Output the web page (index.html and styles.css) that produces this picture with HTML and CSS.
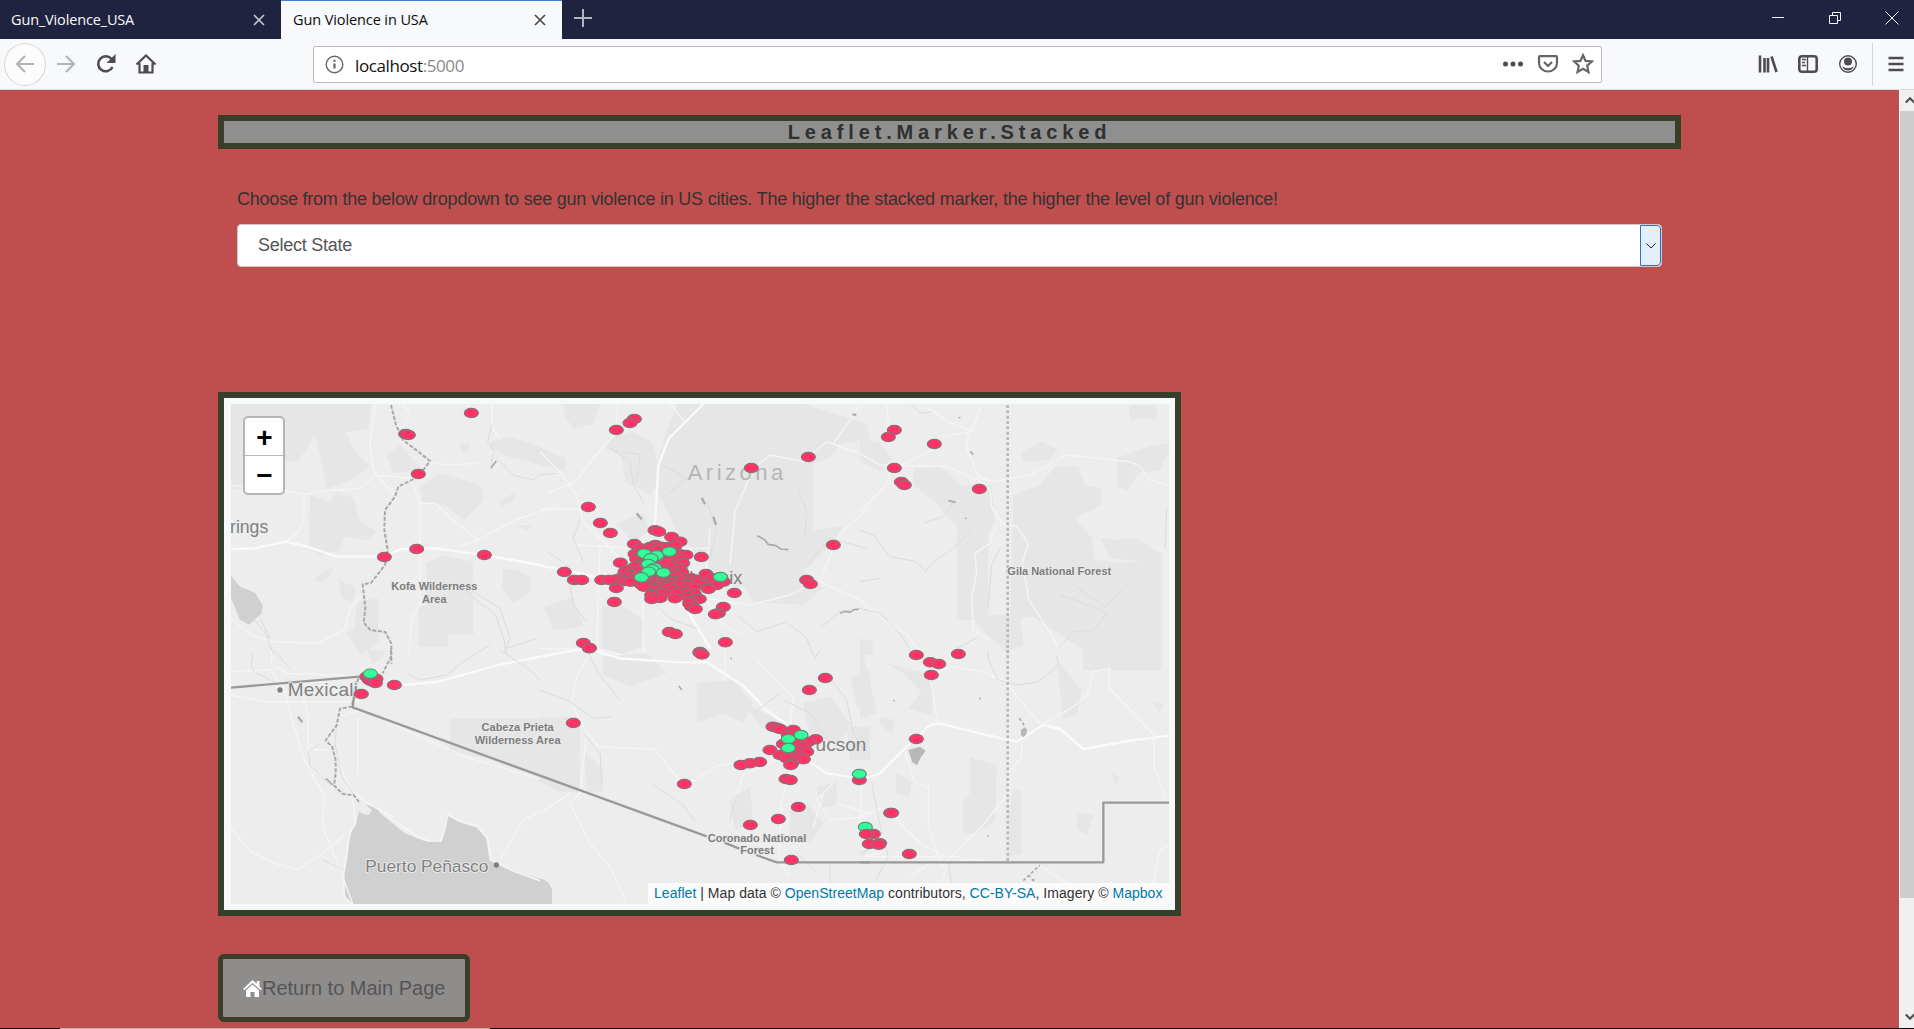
FILE: index.html
```html
<!DOCTYPE html>
<html lang="en">
<head>
<meta charset="utf-8">
<title>Gun Violence in USA</title>
<link rel="stylesheet" href="styles.css">
</head>
<body>
<header class="tabs">
  <div class="tab"><span class="tab-title">Gun_Violence_USA</span><svg class="x" viewBox="0 0 12 12"><path d="M1 1l10 10M11 1L1 11"/></svg></div>
  <div class="tab active"><span class="tab-title">Gun Violence in USA</span><svg class="x" viewBox="0 0 12 12"><path d="M1 1l10 10M11 1L1 11"/></svg></div>
  <svg class="plus" viewBox="0 0 18 18"><path d="M9 0v18M0 9h18"/></svg>
  <div class="win">
    <span><svg width="14" height="14" viewBox="0 0 14 14"><path d="M1 6.500h12"/></svg></span>
    <span><svg width="14" height="14" viewBox="0 0 14 14"><path d="M1.500 4.500h8v8h-8zM4.500 4.500v-3h8v8h-3"/></svg></span>
    <span><svg width="14" height="14" viewBox="0 0 14 14"><path d="M.5.5l13 13M13.500.5l-13 13"/></svg></span>
  </div>
</header>
<nav class="toolbar">
  <span class="nav back"><svg width="20" height="20" viewBox="0 0 20 20"><path d="M19 10H2M10 2L2 10l8 8"/></svg></span>
  <span class="nav dim"><svg width="20" height="20" viewBox="0 0 20 20"><path d="M1 10h17M10 2l8 8-8 8"/></svg></span>
  <span class="nav"><svg width="20" height="20" viewBox="0 0 20 20"><path class="bold" d="M16.500 13A7.500 7.500 0 1 1 15.500 5"/><path class="solid" d="M19.500 0v9h-9z"/></svg></span>
  <span class="nav"><svg width="22" height="20" viewBox="0 0 22 20"><path d="M1.500 10.500L11 1.500l9.500 9M4.500 9v9.500h13V9"/><path class="solid" d="M8.500 11h5v7h-5z"/></svg></span>
  <div class="url">
    <svg width="19" height="19" viewBox="0 0 19 19"><circle class="thin" cx="9.500" cy="9.500" r="8.300"/><path d="M9.500 8.500v5M9.500 4.800v2"/></svg>
    <span class="address">localhost<i>:5000</i></span>
    <span class="tools">
      <svg width="22" height="20" viewBox="0 0 22 20"><g class="solid"><circle cx="3.500" cy="10" r="2.500"/><circle cx="11" cy="10" r="2.500"/><circle cx="18.500" cy="10" r="2.500"/></g></svg>
      <svg width="22" height="20" viewBox="0 0 22 20"><path d="M3 2.200h16q1 0 1 1V9a9 8.500 0 0 1-18 0V3.200q0-1 1-1zM7 8l4 4 4-4"/></svg>
      <svg width="22" height="22" viewBox="0 0 22 22"><path d="M11 2.200l2.600 5.700 6.200.6-4.600 4.200 1.300 6.300L11 15.800 5.500 19l1.300-6.300-4.600-4.200 6.200-.6z"/></svg>
    </span>
  </div>
  <div class="right">
    <span><svg width="20" height="20" viewBox="0 0 20 20"><path class="bold" d="M2 1.500v17M6.500 4v14.500M10 4v14.500M13.500 2.500l5 15.500"/></svg></span>
    <span><svg width="20" height="20" viewBox="0 0 20 20"><rect class="bold" x="1.300" y="2.300" width="17.400" height="15.400" rx="2.500"/><path class="thin" d="M9.500 2v16M4 5.500h4M4 8.500h3M4 11.500h4"/></svg></span>
    <span><svg width="20" height="20" viewBox="0 0 20 20"><circle class="thin" cx="10" cy="10" r="8.300"/><circle class="solid" cx="10" cy="7.500" r="4"/><path class="solid" d="M4 12.500q6 3.500 12 0-2 4-6 4t-6-4z"/></svg></span>
    <span class="menu"><svg width="16" height="16" viewBox="0 0 16 16"><path class="bold" d="M.5 2h15M.5 8h15M.5 14h15"/></svg></span>
  </div>
</nav>
<div class="viewport">
  <main class="page">
    <h1 class="banner">Leaflet.Marker.Stacked</h1>
    <section class="chooser">
      <p>Choose from the below dropdown to see gun violence in US cities. The higher the stacked marker, the higher the level of gun violence!</p>
      <div class="select"><span>Select State</span><b><svg width="10" height="6" viewBox="0 0 10 6"><path d="M.5.5L5 5 9.500.5"/></svg></b></div>
    </section>
    <section class="frame"><div class="map">
      <svg class="canvas" viewBox="0 0 2814 1500" width="938" height="500">
        <g transform="translate(-63 -57)">
          <g class="park">
            <path d="M63 57h420l-8 75-70 10 40 70 35 30-60 45-70 25-15-85-20-75-50 75-45 5-40 80H63z"/>
            <path d="M300 330l60 20 20-30 50 20 20 70 50 30-30 25-70-10-10 40-60 15-35-20z"/>
            <path d="M530 210l40-30 40 45 30 30-90 10z"/><path d="M630 310l60-45 70 20 50 15 12 45-60 60-55-45-70-5z"/>
            <path d="M840 170l60-15 75 25 90 40v40l-110-30-60-15-55-25z"/>
            <path d="M650 535l50-25 90 20v220h-75v35h-90V670l25-10z"/>
            <path d="M880 550l40 5 45 25-5 40-50 35-35-45zM310 580l60-35-10 30-30 20z"/>
            <path d="M385 585l50 20-5 45-35-10zM440 650l65-10v130l-50 40-45-65 25-15zM750 175h30l-5 25h-20zM870 350l45-30-5 30-40 15zM920 420h50l-20 18z"/>
          </g>
          <path class="water" d="M63 573l28 32 44 18 24 40-6 24-36 32-27-15-27-65z"/>
          <path class="road main" d="M63 492l70-2 95-20 60 14 90 30h145l50-22 100-2 150 20 180 32"/>
          <path class="road" d="M63 302l100 4 120 22 70-12 95-5 50-40 120 10M495 57l-15 120 10 80 60 70M282 330v70l-12 35-42 36M606 290l24 65v300l-25 45-8 110M630 355h45l60 55 70 55 110-60 130-45M580 57l20 30-30 60M845 57v70l25 35M660 230l50 10 90-5M63 700l60 50 70 20 130 5 80-40 20-70 30-30M740 485l65-20"/>
          <path class="river" d="M740 590l70 65 45 30 25 70 10 55M790 620l80 50 30 90-20 50M130 700l40 50 20 60M150 700l30 60M890 790l90-30M860 220l50 50 60 15 20-20M845 120l-12 50 20 30-10 40"/>
          <path class="state" d="M543 60l15 60 22 46 45 34 35 28-35 47-60 30-10 30-30 40-2 60 10 60-8 45-42 54-25 4 8 70-5 45 20 22 45 6 18 35v60"/>
          <path class="speck" d="M842 250l17-22"/>
          <text class="town" x="60" y="444" font-size="53">rings</text>
          <text class="area" x="673" y="615">Kofa Wilderness</text><text class="area" x="673" y="653">Area</text>
        </g>
        <g transform="translate(927 -57)">
          <g class="park">
            <path d="M70 57h110l-20 60-60 15-25-40z"/><path d="M205 160l70-20 60 30 20 70-20 90-80-40-10-80-50-20z"/>
            <path d="M410 57h380l190 60 10 45-90 15-30 40-50 20v200l90-15-30 50-70 70-80 60-140 5-60-40-110-110-80-160 30-130z"/>
            <path d="M185 665l50-10 80 50-10 80-60 25-60-20zM10 665l90-30 30 90-90 10zM590 560l180-20 80 70-60 50-150-10zM230 415l80-30 20 50-50 40z"/>
          </g>
          <path class="road main" d="M490 57l-60 60-45 45-30 80-8 140-5 60M340 560l110 130 60 100M0 542l100 18 120 30"/>
          <path class="road" d="M390 57l45 55M235 57l-10 90-80 90-40 55-80 30M0 200l60 60 50 70 20 80 50 50 60 60M0 372h130M570 540l15-160 55-130 50-40 100 20 70-60 95 35M880 175l50-70 30-48M840 590l130 60M380 620l250 40 120-30 90-45 60-140 90-80M110 480l200 10h200M180 480l-10 310M310 650v150M0 790l180 5 70 15M460 590l90 130 60 30M510 430l-10 120"/>
          <path class="river" d="M210 190l60 40 10 70 35 60M250 200l50 10-10 80M370 240l70 40-60 50M500 350l30 80-20 90M770 300l30 80-5 80M120 400l-20 60 30 70M800 540l70-80 110 30M0 270l50-5M20 500l60 40 20 120 40 50M330 640l60 60 80 30M590 690l60 50 90-30 60 50 20 50M840 730l60-50 60-10"/>
          <path class="speck wide" d="M290 385l15 18M485 338l10 20M520 395l8 25M937 89h12"/>
          <path class="speck" d="M652 452l22 12 10 14 24 4 14 10 23 2M900 685l16-6 14 3 12-8 14-1"/>
          <text class="state-name" x="443" y="284">Arizona</text>
          <text class="town" x="607" y="598" font-size="54" text-anchor="end">Phoenix</text>
        </g>
        <g transform="translate(1887 -57)">
          <g class="park">
            <path d="M0 160l60 15 35 45-35 40-60-30z"/><path d="M160 250l80-5 60 55h95l10 100-20 50v285l-30-10-10-20h-55V425l-60-70-70-55z"/>
            <path d="M460 330l80-30 45-55h70l20 55 50 10v50l-80 40 50 60 10 65 80 10 80-10 20-30 20 10v350H670v-60l-90-60-60-40-70 5z"/>
            <path d="M485 200l60-30 50 25-30 30-75 5zM770 220l110-40 47-5v30l-30 50-60 10-35 50-30-10zM808 60h82v45l-40-5-42 8zM720 460l50 5 60-5 60 40-20 30-120-10zM370 690h110l10 90-50 20-70-60z"/>
            <path d="M0 760l40 10v40H0z"/>
          </g>
          <path class="road" d="M205 70l60 40 70 30 30-80M325 140l-5 50 35 85 45 15 110-20 110-60 190 20 30 15 30 40 70 20M335 140l-90 15M0 205l60 35 200 5 95 40 35 30 5 50 30 50 45 10 35 50-18 60 20 110 70 110 15 30M410 420l-20 55-45 30 5 60-15 70 5 100 50 30M80 57l10 120M0 380l80-80 15-50 30-10 120-60M0 650l80 60 60 40 50 60"/>
          <path class="river" d="M155 60l30 25 30-5M0 435l40 15 50 65 80 15 25 30 30-35 50-30 40-40 20-20M190 415l60-20 35-50M420 490l-25 50-10 130M600 630l60 20 80 35-40 50-60 5-45 50M640 600l95 65 70-65M920 370l-5 120M0 590l60-10M0 670l60 15 60 60 30 50M350 760l-60 30"/>
          <path class="speck" d="M265 347l22 5M330 200l10 8M296 98h5M315 400h4"/>
          <path class="stateline" d="M443 60v750"/>
          <text class="area start" x="442" y="569">Gila National Forest</text>
        </g>
        <g transform="translate(-63 738)">
          <path class="park" d="M720 205h270v180l-160-60-110-20z"/><path class="park" d="M470 0h50v20l-30 20z"/>
          <path class="water" d="M427 450l20 35-10 35q-22 25-24 80l-12 70 2 70 22 22h565v-75l-90-28-62-28-10-70-30-30-50-15-40-20-3 42-10 35h-52l-60-24-70-58-20-22-30-4z"/>
          <path d="M427 450q15 45 50 45l8-15-25-20z" class="land"/>
          <path class="road" d="M63 65l120-5 40 60 20 80 40 130 60 110-5 90 50 120 40 112M63 535l60 70 70 35 70 18 80-52 60-50M185 0v45l50 25 150 5 60 5M270 95l25 110v95h60M63 135l100 20h280v-80M443 200v175M385 200l70-20 200 90 110 50 220 65M380 320l40 100 70 50 60 30M870 630l70-120 50-25"/>
          <path class="road main" d="M535 90l50 15 100-10 180-50 125-25"/>
          <path class="coast" d="M427 450l5 30 5 40q-22 25-24 80l-12 70 2 70 22 22M505 472l45 38 65 45 40 18h38l12-38 8-42 40 22 50 15 30 35 10 65 72 35 110 40"/>
          <path class="river" d="M130 10q-15 50 10 60l60 30M190 0l50 55M330 280l-35 25 5 40 60 60M380 220l-5 60 20 100 40 60M590 70l40 20 80-15 50-40 80-50M340 630l60 30M870 0l90 60 30 30"/>
          <path class="state" d="M543 0v20l-25 50M445 85l-20 85-35 6-10 50-33 45 20 20 10 40v40l-5 35 25 25 35 5 15 20"/>
          <path class="speck wide" d="M264 200l13 17"/><path class="speck" d="M348 385l20 20"/>
          <path class="border" d="M63 113l385-33M438 95l-10 77 562 205"/>
          <circle class="dot" cx="210" cy="120" r="8"/><circle class="dot" cx="859" cy="645" r="8"/>
          <text class="town halo" x="233" y="139" font-size="57" textLength="211">Mexicali</text>
          <text class="town halo" x="466" y="665" font-size="52" textLength="369">Puerto Peñasco</text>
        </g>
        <g transform="translate(927 738)">
          <g class="park"><path d="M190 20l130-10 60 60-110 40-80-35z"/><path d="M470 100l110-10 60 70-30 60-60-30-80 30zM0 200h120v225H60L0 395zM600 150l110 60-40 30zM790 160l80-20 60 80-30 60-90-20zM930 80l60-20v130l-40-20z"/><path d="M570 450l60-40 10 110-55 20zM750 480l50-20 50 60-40 60-60-20zM830 410l60-15v70l-50 10zM920 230h70v100h-60zM130 300l60 60v65h-50z"/></g>
          <path class="water" d="M0 685q30 8 36 35v42H0z"/>
          <path class="road main" d="M0 20l140-25 100 30 180 12h80l110 70 70 75 60 40M800 330l60 40 100 15"/>
          <path class="road" d="M150 10l-40 70-15 80 40 80 40 50 170 8 75 95h40l70-45 110-20M140 250l-20 180-30 30 60 120 60 70 50 110M555 0v90M650 30l110 110-10 80M755 350l-30 100-8 180 30 50M720 325l-110 50-30 80M890 460l100 30M850 430l-30 100M0 490l90-60M965 400l-5 120M880 400l-50 50 40 60 110-10"/>
          <path class="river" d="M140 0l35 70 65 80M0 120l90 35 70 50 55-5M860 70l60 80 20 100 35 60M340 405l90 60 35 50M840 0l-20 30M770 610l60 60M590 430l-20 80M640 190l80-60M130 250l50 60 5 90M730 150l80 40 60 90M870 640v60"/>
          <path class="speck" d="M416 108l10 12M572 25h4"/>
          <path class="border" d="M0 377l500 182M553 578l45 18M648 615l62 22h280"/>
          <text class="area" x="-67" y="244">Cabeza Prieta</text><text class="area" x="-67" y="282">Wilderness Area</text>
          <text class="town" x="979" y="302" font-size="57" text-anchor="end">Tucson</text>
          <text class="area" x="651" y="575">Coronado National</text><text class="area" x="651" y="613">Forest</text>
        </g>
        <g transform="translate(1887 738)">
          <g class="park"><path d="M0 0h10l40 190-50 15zM80 40l60 15 80 20-5 120-70-20 40-50-60-60zM60 200l45 10-10 40-35-25zM105 365l50 30-5 45-40-10zM330 320l80 25-5 170-55 35h-40V450l20-20zM590 30l75 90-15 75-40 10z"/><path d="M650 490l50 5-20 60-30-20zM755 370l25 15-15 20zM875 155l35 10-10 20zM460 420h25v190l-40 10v-130zM680 0h100v20l-20 30-60-20z"/></g>
          <path class="road main" d="M0 390l60-20 80-80 70-65 30-5 120 30 110 25 80-50 50 12 70 60 140-25 117-15"/>
          <path class="road" d="M210 80l25 145M443 105l100 120 90-50 50-40 15-70 50-10v60l135 140v100l35 90M215 75l60-25 90 15 80 30M485 280v40l-40 50v60l-80 100-50 50-50 50-20 20-40-120v-120l-40-10-30-90M0 500l60-25M0 620h300M0 620l60-10M100 500l80 80 80 40M150 680l60-40 120-10 200 10 60 40 60 40M720 760l160-60 20-100 40-20M265 635l-20 60"/>
          <path class="river" d="M385 0v30l30 60 60 15 60-10 60-50-5-30M35 400l30 150-60 70M70 570l15 50-40 75M0 610l60-30M265 640l10 60"/>
          <path class="lake" d="M145 300l35-10 17 12-14 20-12 23-14-8zM483 240l10-8 8 6-2 15-8 9-8-6z"/>
          <path class="stateline" d="M443 0v635"/><path class="border" d="M0 637h730V458h200"/>
          <path class="speck" stroke-dasharray="9 7" d="M478 205l16 23M490 692l50-47M505 675l20 22M515 690h16"/>
          <path class="speck" d="M100 152h4M358 146h5M382 558h5"/>
        </g>
        <g id="markers"></g>
      </svg>
      <div class="zoomer"><span>+</span><span>−</span></div>
      <div class="credit"><a>Leaflet</a> | Map data © <a>OpenStreetMap</a> contributors, <a>CC-BY-SA</a>, Imagery © <a>Mapbox</a></div>
    </div></section>
    <a class="return"><svg width="19" height="17" viewBox="0 0 19 17"><path d="M9.500 0L0 9l1.300 1.300L9.500 3l8.200 7.300L19 9l-2.500-2.500V1h-2.700v2.700zM9.500 4.500L3 10.300V17h4.500v-5h4v5H16v-6.700z"/></svg>Return to Main Page</a>
  </main>
  <aside class="scroll">
    <svg width="9" height="20" viewBox="0 0 9 20"><path d="M.8 12.500L5 8.300l4.500 4.500"/></svg>
    <div class="thumb"></div>
    <svg width="9" height="20" viewBox="0 0 9 20"><path d="M.8 6.500L5 10.700l4.500-4.500"/></svg>
  </aside>
</div>
<footer class="taskbar"><span></span></footer>
<script src="markers.js"></script>
</body>
</html>
```
FILE: styles.css
```css
* { box-sizing: border-box; }
body { margin: 0; width: 1914px; height: 1029px; overflow: hidden; display: flex; flex-direction: column; font-family: "Liberation Sans", Arial, sans-serif; background: #bf4e4e; }
svg { display: block; flex: none; }
.tabs { height: 39px; flex: none; display: flex; align-items: stretch; background: #202340; font-family: "Open Sans", "Noto Sans", sans-serif; }
.tab { width: 281px; padding: 0 16px 0 11px; display: flex; align-items: center; justify-content: space-between; color: #f9f9fa; font-size: 14.500px; letter-spacing: -.15px; }
.tab.active { background: #f8f9fb; border-top: 1px solid #3f82c8; color: #0c0c0d; padding-left: 12px; letter-spacing: -.1px; }
.tab-title { padding-bottom: 1px; }
.active .tab-title { padding-bottom: 2px; }
.x { width: 12px; height: 12px; fill: none; stroke: #c5c6d0; stroke-width: 1.600; }
.active .x { stroke: #444; }
.plus { width: 18px; height: 18px; margin: 9px 0 0 12px; fill: none; stroke: #b4b5c0; stroke-width: 2; }
.win { display: flex; margin-left: auto; align-items: center; padding-bottom: 3px; }
.win span { width: 57px; display: flex; justify-content: center; }
.win span:last-child { width: 51px; padding-left: 6px; }
.win svg { fill: none; stroke: #f4f4fa; stroke-width: 1; }
.toolbar { height: 51px; flex: none; display: flex; align-items: center; background: #f8f9fb; border-bottom: 1px solid #dcdce0; padding-left: 4px; }
.toolbar svg { fill: none; stroke: #4d4d50; stroke-width: 2.200; }
.toolbar .solid { fill: #4d4d50; stroke: none; }
.toolbar .bold { stroke-width: 2.600; }
.toolbar .thin { stroke-width: 1.400; }
.nav { width: 40px; display: flex; justify-content: center; }
.nav.back { width: 42px; height: 43px; border: 1px solid #d6d7dc; border-radius: 50%; align-items: center; background: #fcfcfd; }
.toolbar .back svg, .toolbar .dim svg { stroke: #b3b4b8; }
.url { width: 1289px; height: 37px; margin-left: 147px; background: #fff; border: 1px solid #b9b9bd; border-radius: 2px; display: flex; align-items: center; padding: 0 7px 0 11px; }
.toolbar .url svg { stroke: #666669; }
.address { margin-left: 11px; padding-top: 2px; font: 17px "Open Sans", "Noto Sans", sans-serif; letter-spacing: -.4px; color: #111; }
.address i { font-style: normal; color: #8a8a8d; }
.tools { margin-left: auto; display: flex; gap: 13px; align-items: center; }
.right { margin-left: auto; display: flex; align-items: center; height: 100%; }
.right span { width: 40px; display: flex; justify-content: center; }
.right .menu { width: 42px; height: 43px; align-items: center; border-left: 1px solid #d5d5d9; margin-left: 4px; padding-left: 5px; }
.viewport { flex: 1; display: flex; min-height: 0; }
.page { flex: 1; background: #bf4e4e; padding: 25px 218px 0; display: flex; flex-direction: column; align-items: flex-start; overflow: hidden; }
.banner { margin: 0; width: 1463px; height: 34px; border: 6px solid #3a3e28; background: #8f8f8f; color: #303030; font-size: 20px; line-height: 22px; font-weight: bold; letter-spacing: 4.850px; text-align: center; }
.chooser { padding: 39px 19px 0; width: 1463px; }
.chooser p { margin: 0; font-size: 18px; line-height: 22px; letter-spacing: -.221px; color: #333; white-space: nowrap; }
.select { margin-top: 14px; height: 43px; width: 1425px; background: #fff; border: 1px solid #d9c4c4; border-radius: 4px; display: flex; align-items: stretch; justify-content: space-between; padding-left: 20px; font-size: 18px; line-height: 41px; letter-spacing: -.25px; color: #555; }
.select b { width: 21px; border: 1px solid #2578c4; background: #e3effa; border-radius: 0 4px 4px 0; display: flex; justify-content: center; align-items: center; }
.select svg { fill: none; stroke: #222; }
.frame { margin-top: 125px; width: 963px; height: 524px; border: 6px solid #363f29; background: #f6f9f9; padding: 6px 7px; flex: none; }
.map { position: relative; width: 938px; height: 500px; background: #ededed; overflow: hidden; }
.canvas { fill: none; stroke-linejoin: round; }
.park { fill: #e6e6e6; }
.land { fill: #ededed; }
.water { fill: #d0d0d0; }
.lake { fill: #b8b8b8; }
.road { stroke: #f5f5f5; stroke-width: 4; }
.road.main { stroke: #fafafa; stroke-width: 7; }
.coast { stroke: #f5f5f5; stroke-width: 5; }
.river { stroke: #dcdcdc; stroke-width: 3; }
.speck { stroke: #aaa; stroke-width: 5; }
.speck.wide { stroke-width: 7; }
.state { stroke: #a9a9a9; stroke-width: 6; stroke-dasharray: 12 5; }
.stateline { stroke: #bababa; stroke-width: 8; stroke-dasharray: 9 7; }
.border { stroke: #999; stroke-width: 7; }
.dot { fill: #808080; }
.town { fill: #808080; }
.halo { stroke: #ededed; stroke-width: 5; paint-order: stroke; }
.area { fill: #7d7d7d; font-size: 33px; font-weight: bold; text-anchor: middle; stroke: #eaeaea; stroke-width: 5; paint-order: stroke; }
.area.start { text-anchor: start; }
.state-name { fill: #b5b5b5; font-size: 66px; letter-spacing: 10.500px; }
.marker { fill: #ff3366; stroke: #8c7078; stroke-width: 3.500; }
.marker.top { fill: #33ff99; stroke: #5c8f78; }
.zoomer { position: absolute; left: 12px; top: 12px; width: 42px; height: 79px; border: 2px solid #b5b5b5; border-radius: 5px; background: #fff; display: flex; flex-direction: column; }
.zoomer span { height: 37px; padding-left: 1px; text-align: center; font: bold 28px/39px "Liberation Sans", sans-serif; color: #000; }
.zoomer span:first-child { height: 38px; border-bottom: 1px solid #bbb; }
.credit { position: absolute; right: 0; bottom: 0; height: 21px; width: 521px; padding-left: 6px; background: rgba(255,255,255,.75); font-size: 14px; line-height: 20px; letter-spacing: .04px; color: #333; white-space: nowrap; }
.credit a { color: #0078a8; }
.return { margin-top: 38px; width: 252px; height: 68px; flex: none; border: 5px solid #3a3e28; border-radius: 6px; background: #8f8c8c; display: flex; align-items: center; padding-left: 20px; font-size: 20px; color: #555; white-space: nowrap; }
.return svg { fill: #fff; }
.scroll { width: 15px; background: #f0f0f0; border-left: 1px solid #fff; display: flex; flex-direction: column; align-items: flex-end; }
.scroll svg { fill: none; stroke: #505050; stroke-width: 2.200; }
.thumb { width: 14px; height: 787px; margin: 1px 0 auto; background: #cdcdcd; }
.taskbar { height: 1px; flex: none; background: #180808; padding-left: 60px; }
.taskbar span { display: block; height: 1px; width: 430px; background: #c9a9a5; }
```
FILE: markers.js
```js
// Marker positions for each map tile: tile offset, then incidents and stack tops.
const tiles = [
  { at: [-63, -57], low: [784,84, 587,147, 595,150, 625,267, 523,516, 620,492, 823,510], top: [] },
  { at: [927, -57], low: [
    283,102, 270,114, 229,135, 634,249, 805,216, 145,366, 181,414, 211,444, 880,480, 800,585, 811,597,
    345,436, 356,440, 395,456, 420,470, 484,516, 73,561, 103,585, 125,585, 229,609, 223,651,
    583,624, 550,666, 535,685, 526,688, 388,741, 406,747, 130,774, 148,790, 556,772, 480,801, 486,808,
    346,480, 330,486, 362,485, 385,486, 405,482, 283,477, 300,490, 318,494, 350,495, 285,507, 300,515,
    400,500, 420,508, 438,510, 290,522, 310,525, 375,515, 395,522, 420,524, 428,535, 305,540, 285,545,
    350,540, 380,535, 400,545, 420,550, 241,533, 262,555, 255,560, 285,562, 300,555, 275,570, 310,568,
    380,560, 400,562, 425,562, 415,572, 395,575, 350,575, 330,580, 260,578, 240,580, 285,580, 185,585,
    225,584, 208,585, 255,588, 272,590, 453,580, 475,585, 498,567, 520,580, 550,590, 530,600, 490,600,
    340,590, 347,594, 355,588, 362,596, 370,585, 378,594, 385,589, 393,597, 400,588, 408,596, 416,590,
    423,598, 430,584, 440,590, 448,596, 470,596, 440,600, 415,598, 390,600, 360,600, 330,605, 303,598,
    312,605, 345,612, 368,608, 375,612, 384,607, 400,614, 430,614, 460,608, 505,612, 340,622, 370,625,
    440,624, 463,626, 335,630, 410,625, 360,639, 335,642, 405,640, 445,635, 478,642, 450,648, 449,656,
    455,665, 466,672
  ], top: [313,506, 350,511, 388,500, 333,520, 325,537, 344,548, 336,553, 326,560, 370,563, 304,577, 541,576] },
  { at: [1887, -57], low: [103,135, 85,156, 223,177, 103,249, 124,291, 133,300, 358,312], top: [] },
  { at: [-63, 738], low: [470,80, 478,90, 498,86, 485,94, 496,99, 553,105, 454,132], top: [481,71] },
  { at: [927, 738], low: [
    148,-6, 480,8, 486,13, 856,84, 808,120, 100,219, 433,402, 699,230, 710,233, 720,237, 760,240,
    745,255, 827,268, 805,275, 730,282, 765,278, 790,290, 690,300, 765,300, 800,305, 740,305, 720,315,
    755,318, 775,320, 740,325, 790,328, 755,340, 752,345, 659,336, 630,340, 603,345, 738,387, 751,390,
    775,471, 715,507, 631,525, 754,630, 958,390
  ], top: [783,255, 745,267, 745,294, 958,372] },
  { at: [1887, 738], low: [169,15, 295,12, 211,37, 236,42, 214,75, 169,267, 92,489, 95,489, 40,552, 28,582, 59,580, 56,584, 148,612], top: [16,531] }
];

const layer = document.getElementById('markers');

function addMarker(x, y, name) {
  const dot = document.createElementNS('http://www.w3.org/2000/svg', 'ellipse');
  dot.setAttribute('class', name);
  dot.setAttribute('cx', x);
  dot.setAttribute('cy', y);
  dot.setAttribute('rx', 21);
  dot.setAttribute('ry', 14);
  layer.appendChild(dot);
}

for (const [kind, name] of [['low', 'marker'], ['top', 'marker top']]) {
  for (const tile of tiles) {
    for (let i = 0; i < tile[kind].length; i += 2) {
      addMarker(tile[kind][i] + tile.at[0], tile[kind][i + 1] + tile.at[1], name);
    }
  }
}
// This incident lies in front of the neighbouring stack's cap.
addMarker(1887 + 19, 738 + 552, 'marker');
```
